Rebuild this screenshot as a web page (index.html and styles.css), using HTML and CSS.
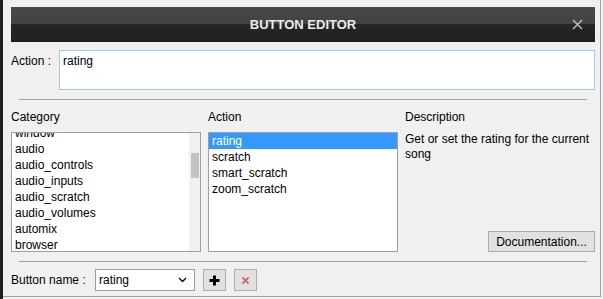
FILE: index.html
```html
<!DOCTYPE html>
<html lang="en">
<head>
  <meta charset="UTF-8">
  <title>Button Editor</title>
  <link rel="stylesheet" href="styles.css">
</head>
<body>

  <div class="backdrop"></div>

  <div class="dialog">
    <div class="titlebar">
      <span>BUTTON EDITOR</span>
      <svg class="close" width="11" height="11" viewBox="0 0 11 11">
        <path d="M1 1 L10 10 M10 1 L1 10" stroke="#c4c4c4" stroke-width="1.4" fill="none"/>
      </svg>
    </div>

    <div class="action-row">
      <label class="action-label">Action :</label>
      <div class="action-input">rating</div>
    </div>

    <hr class="sep">

    <div class="columns">
      <div class="col-head">Category</div>
      <div class="col-head">Action</div>
      <div class="col-head">Description</div>

      <div class="listbox">
        <ul class="items scrolled">
          <li>window</li>
          <li>audio</li>
          <li>audio_controls</li>
          <li>audio_inputs</li>
          <li>audio_scratch</li>
          <li>audio_volumes</li>
          <li>automix</li>
          <li>browser</li>
        </ul>
        <div class="scrollbar"><div class="thumb"></div></div>
      </div>

      <div class="listbox">
        <ul class="items">
          <li class="selected">rating</li>
          <li>scratch</li>
          <li>smart_scratch</li>
          <li>zoom_scratch</li>
        </ul>
      </div>

      <div class="desc">
        <p>Get or set the rating for the current song</p>
        <button class="doc-btn">Documentation...</button>
      </div>
    </div>

    <hr class="sep">

    <div class="name-row">
      <label>Button name :</label>
      <div class="name-select">
        <span>rating</span>
        <svg width="9" height="6" viewBox="0 0 9 6">
          <path d="M1 1 L4.5 4.5 L8 1" stroke="#000" stroke-width="1.3" fill="none"/>
        </svg>
      </div>
      <button class="icon-btn">
        <svg width="11" height="11" viewBox="0 0 11 11">
          <path d="M5.5 0.5 V10.5 M0.5 5.5 H10.5" stroke="#000" stroke-width="3" fill="none"/>
        </svg>
      </button>
      <button class="icon-btn">
        <svg width="9" height="9" viewBox="0 0 9 9">
          <path d="M1.5 1.5 L7.5 7.5 M7.5 1.5 L1.5 7.5" stroke="#d98c8c" stroke-width="2.2" fill="none"/>
          <path d="M1.5 1.5 L7.5 7.5 M7.5 1.5 L1.5 7.5" stroke="#c0504d" stroke-width="1" fill="none"/>
        </svg>
      </button>
    </div>
  </div>

</body>
</html>
```

FILE: styles.css
```css
body {
  margin: 0;
  height: 299px;
  display: flex;
  background: #f0f0f0;
  font-family: 'Liberation Sans', Arial, sans-serif;
  font-size: 12px;
  color: #000;
}

.backdrop {
  width: 3px;
  background: #1e1e1e;
}

.dialog {
  width: 598px;
  height: 297px;
  box-sizing: border-box;
  padding: 7px 5px 0 8px;
  border-right: 1px solid #a0a0a0;
  border-bottom: 1px solid #a0a0a0;
}

.titlebar {
  position: relative;
  height: 35px;
  display: flex;
  align-items: center;
  justify-content: center;
  background: linear-gradient(#484848 0, #424242 50%, #262626 50%, #1f1f1f 100%);
  color: #ececec;
  font-size: 13px;
  font-weight: bold;
}

.close {
  position: absolute;
  right: 12px;
  top: 12px;
}

.action-row {
  display: flex;
  margin-top: 8px;
}

.action-label {
  width: 48px;
  padding-top: 4px;
  line-height: 14px;
}

.action-input {
  flex: 1;
  height: 40px;
  box-sizing: border-box;
  border: 1px solid #99ccf5;
  background: #fff;
  padding: 3px 3px;
  line-height: 14px;
}

.sep {
  height: 0;
  border: 0;
  border-top: 1px solid #a0a0a0;
  margin: 9px 8px 0 8px;
}

.columns {
  display: grid;
  grid-template-columns: 190px 190px 1fr;
  grid-template-rows: 14px 120px;
  column-gap: 7px;
  row-gap: 8px;
  margin-top: 10px;
}

.col-head {
  line-height: 14px;
}

.listbox {
  display: flex;
  box-sizing: border-box;
  border: 1px solid #a0a0a0;
  background: #fff;
  overflow: hidden;
}

.items {
  flex: 1;
  list-style: none;
  margin: 0;
  padding: 0;
}

.items li {
  line-height: 16px;
  padding-left: 3px;
  white-space: nowrap;
}

.items.scrolled {
  margin-top: -8px;
}

.items .selected {
  background: #3399ff;
  color: #fff;
}

.scrollbar {
  width: 11px;
  background: #f0f0f0;
  display: flex;
  justify-content: center;
}

.thumb {
  width: 8px;
  height: 25px;
  margin-top: 20px;
  background: #c2c2c2;
}

.desc {
  display: flex;
  flex-direction: column;
  justify-content: space-between;
  align-items: flex-end;
}

.desc p {
  margin: 0;
  align-self: stretch;
  line-height: 15px;
}

.doc-btn {
  width: 107px;
  height: 21px;
  padding: 0;
  border: 1px solid #adadad;
  background: #e1e1e1;
  font-family: inherit;
  font-size: 12px;
  color: #000;
}

.name-row {
  display: flex;
  align-items: center;
  gap: 8px;
  margin-top: 7px;
}

.name-row label {
  width: 76px;
}

.name-select {
  width: 100px;
  height: 22px;
  box-sizing: border-box;
  border: 1px solid #9a9a9a;
  background: #fff;
  display: flex;
  align-items: center;
  justify-content: space-between;
  padding: 0 7px 0 3px;
}

.icon-btn {
  width: 23px;
  height: 22px;
  padding: 0;
  border: 1px solid #adadad;
  background: #e1e1e1;
  display: flex;
  align-items: center;
  justify-content: center;
}
```
